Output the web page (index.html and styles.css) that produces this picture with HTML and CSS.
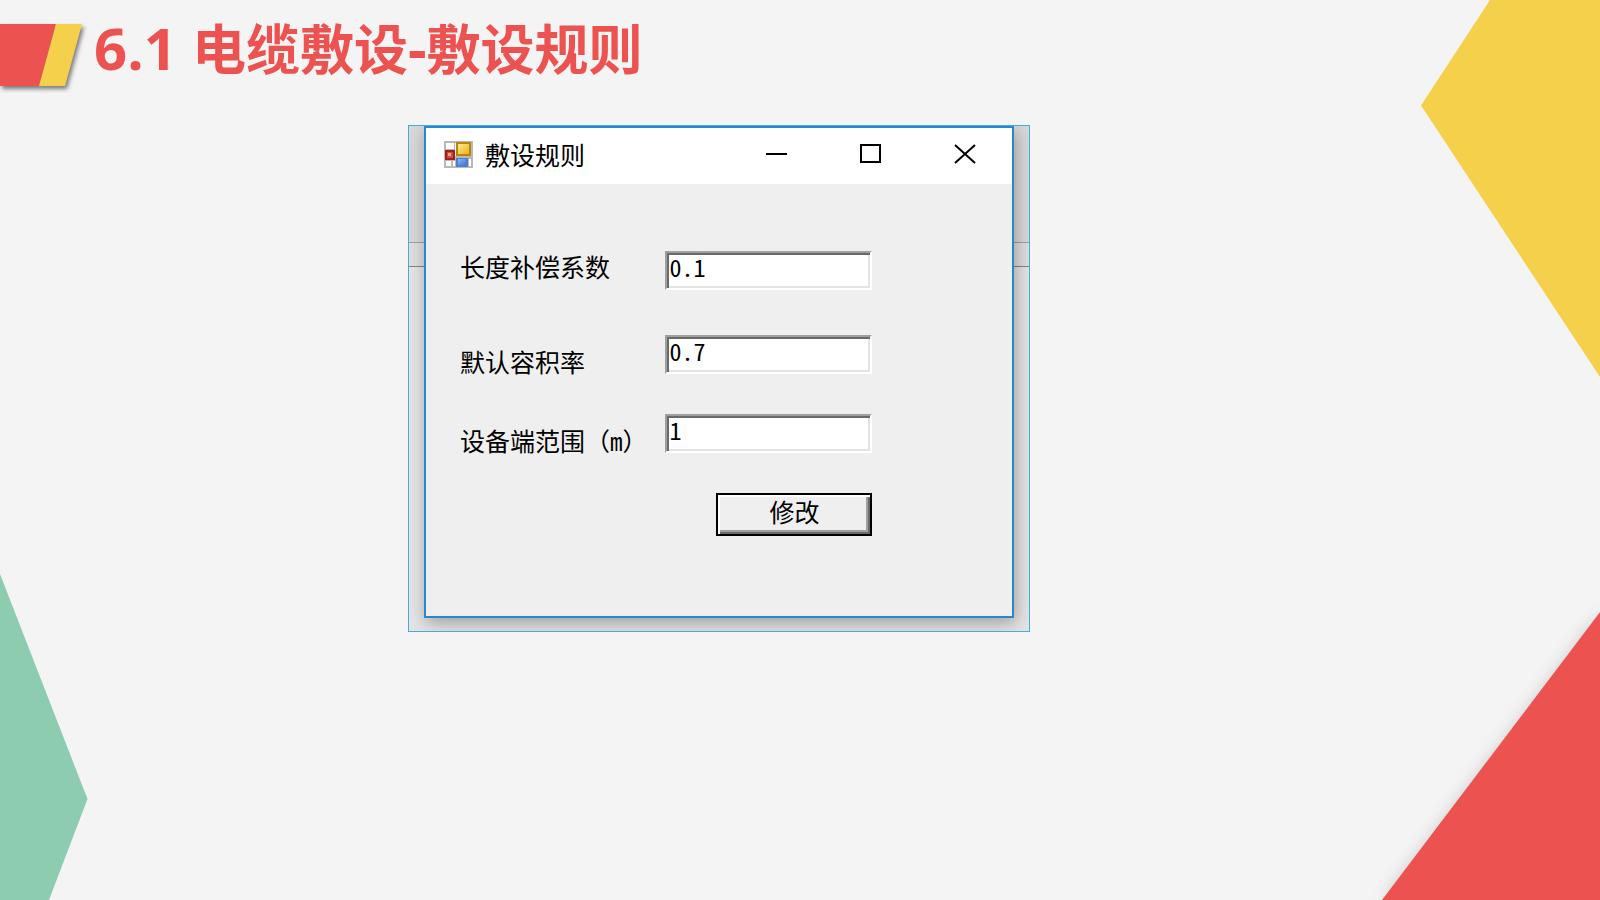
FILE: index.html
```html
<!DOCTYPE html>
<html lang="zh-CN">
<head>
<meta charset="utf-8">
<meta name="viewport" content="width=device-width, initial-scale=1">
<title>6.1 电缆敷设-敷设规则</title>
<link rel="stylesheet" href="styles.css">
</head>
<body>
<div class="slide">
  <svg class="deco deco-yellow" viewBox="0 0 179 377" aria-hidden="true"><path d="M69 0H179V377L0 105.500Z" fill="#f5d04a"/></svg>
  <svg class="deco deco-red" viewBox="0 0 218 288" aria-hidden="true"><path d="M218 0V288H0Z" fill="#ec5350"/></svg>
  <svg class="deco deco-green" viewBox="0 0 88 326" aria-hidden="true"><path d="M0 0L87.500 225L49 326H0Z" fill="#8dccb1"/></svg>

  <header class="heading">
    <svg class="mark" viewBox="0 0 82 62" aria-hidden="true">
      <path d="M0 0H56L39 62H0Z" fill="#ec5350"/>
      <path d="M56 0H82L65 62H39Z" fill="#f5d04a"/>
    </svg>
    <h1 class="title"><span class="latin">6.1 </span>电缆敷设<span class="latin">-</span>敷设规则</h1>
  </header>

  <main class="frame">
    <section class="window" aria-labelledby="window-title">
      <div class="titlebar">
        <svg class="app-icon" viewBox="0 0 29 27" aria-hidden="true">
          <defs>
            <linearGradient id="gold" x2="1" y2="1"><stop stop-color="#ffe98a"/><stop offset="1" stop-color="#edb21c"/></linearGradient>
            <linearGradient id="blue" x2="1" y2="1"><stop stop-color="#8db8f2"/><stop offset="1" stop-color="#3f74d2"/></linearGradient>
          </defs>
          <path d="M0 0H29V27H0Z" fill="#b9b9b9"/>
          <path d="M2 2H10V8H2ZM2 20H7V25H2ZM9 20H11V25H9ZM25 18H27V25H25ZM12 2V15H11V2Z" fill="#fff"/>
          <path d="M12 1H27V15H12Z" fill="#b8860f"/>
          <path d="M14 3H25V13H14Z" fill="url(#gold)"/>
          <path d="M1 9H11V19H1Z" fill="#a3201a"/>
          <path d="M3 11H9V17H3Z" fill="#cf4b3d"/>
          <path d="M4 12H7V15H4Z" fill="#f0a090"/>
          <path d="M12 17H24V26H12Z" fill="#4b7fd6"/>
          <path d="M14 18H22V24H14Z" fill="url(#blue)"/>
        </svg>
        <h2 class="window-title" id="window-title">敷设规则</h2>
        <div class="controls">
          <button class="control" type="button" aria-label="最小化"><svg viewBox="0 0 22 20"><path d="M0 10H21" /></svg></button>
          <button class="control" type="button" aria-label="最大化"><svg viewBox="0 0 22 20"><path d="M1 1H20V18H1Z"/></svg></button>
          <button class="control" type="button" aria-label="关闭"><svg viewBox="0 0 22 20"><path d="M1 1L21 19M21 1L1 19"/></svg></button>
        </div>
      </div>
      <form class="form">
        <div class="row row-first">
          <label for="length-factor">长度补偿系数</label>
          <input class="field" id="length-factor" type="text" value="0.1">
        </div>
        <div class="row">
          <label for="fill-rate">默认容积率</label>
          <input class="field" id="fill-rate" type="text" value="0.7">
        </div>
        <div class="row">
          <label for="device-range">设备端范围（<span class="half">m</span>）</label>
          <input class="field" id="device-range" type="text" value="1">
        </div>
        <button class="submit" type="button">修改</button>
      </form>
    </section>
  </main>
</div>
</body>
</html>
```
FILE: styles.css
```css
* {
  box-sizing: border-box;
}

body {
  margin: 0;
  background: #f4f4f4;
  font-family: "Noto Sans CJK SC", sans-serif;
  color: #000;
}

.slide {
  position: relative;
  min-height: 100vh;
  overflow: hidden;
}

.deco {
  position: absolute;
  overflow: visible;
}

.deco-yellow {
  top: 0;
  right: 0;
  width: 179px;
}

.deco-red {
  right: 0;
  bottom: 0;
  width: 218px;
  filter: drop-shadow(-1px -1px 7px rgba(0, 0, 0, 0.12));
}

.deco-green {
  left: 0;
  bottom: 0;
  width: 88px;
}

.heading {
  display: flex;
  align-items: flex-start;
  gap: 12px;
  height: 86px;
  padding-top: 24px;
}

.mark {
  flex: none;
  width: 82px;
  overflow: visible;
  filter: drop-shadow(2px 3px 2px rgba(0, 0, 0, 0.5));
}

.title {
  margin: 0;
  font: bold 54px/48px "Open Sans", "Noto Sans CJK SC", sans-serif;
  color: #ec5350;
}

.latin {
  font-size: 58px;
}

.frame {
  width: 38.9%;
  min-width: 560px;
  margin: 39px 0 0 25.5%;
  padding: 0 15px 13px;
  border: 1px solid #3fb0dc;
  background: linear-gradient(#d8d8d8 116px, #a0a0a0 116px, #a0a0a0 117px, #dedede 117px, #dedede 140px, #858585 140px, #858585 141px, #e4e4e4 141px);
  overflow: hidden;
}

.window {
  border: 2px solid #2a86cf;
  background: #efefef;
  box-shadow: 2px 5px 16px rgba(0, 0, 0, 0.3);
}

.titlebar {
  display: flex;
  align-items: center;
  height: 56px;
  padding: 0 0 4px 18px;
  background: #fff;
}

.app-icon {
  width: 29px;
}

.window-title {
  margin: 0 0 0 12px;
  font-size: 25px;
  line-height: 32px;
  font-weight: 400;
}

.controls {
  display: flex;
  margin-left: auto;
}

.control {
  display: flex;
  align-items: center;
  justify-content: center;
  width: 94px;
  height: 52px;
  padding: 0;
  border: 0;
  background: none;
}

.control svg {
  width: 22px;
  fill: none;
  stroke: #000;
  stroke-width: 2;
}

.form {
  display: flex;
  flex-direction: column;
  padding: 67px 140px 80px 34px;
  font-size: 25px;
  line-height: 25px;
}

.row {
  display: flex;
  align-items: flex-end;
  justify-content: space-between;
  margin-bottom: 40px;
}

.row label {
  white-space: nowrap;
}

.row-first {
  align-items: flex-start;
  margin-bottom: 45px;
}

.row-first label {
  padding-top: 3px;
}

.half {
  font-feature-settings: "hwid";
}

.field {
  width: 207px;
  height: 39px;
  padding: 0 2px 8px;
  border: 2px solid;
  border-color: #a0a0a0 #fff #fff #a0a0a0;
  border-radius: 0;
  outline: 0;
  background: #fff;
  box-shadow: inset 2px 2px #696969, inset -2px -2px #e3e3e3;
  font-family: "Noto Sans CJK SC", sans-serif;
  font-size: 24px;
  line-height: 24px;
  font-feature-settings: "hwid";
  color: #000;
}

.submit {
  align-self: flex-end;
  width: 156px;
  height: 43px;
  padding: 0 0 6px;
  border: 2px solid #000;
  background: #efefef;
  box-shadow: inset 2px 2px #fff, inset -2px -2px #696969, inset -4px -4px #a0a0a0;
  font-family: "Noto Sans CJK SC", sans-serif;
  font-size: 25px;
  line-height: 25px;
  color: #000;
}
```
